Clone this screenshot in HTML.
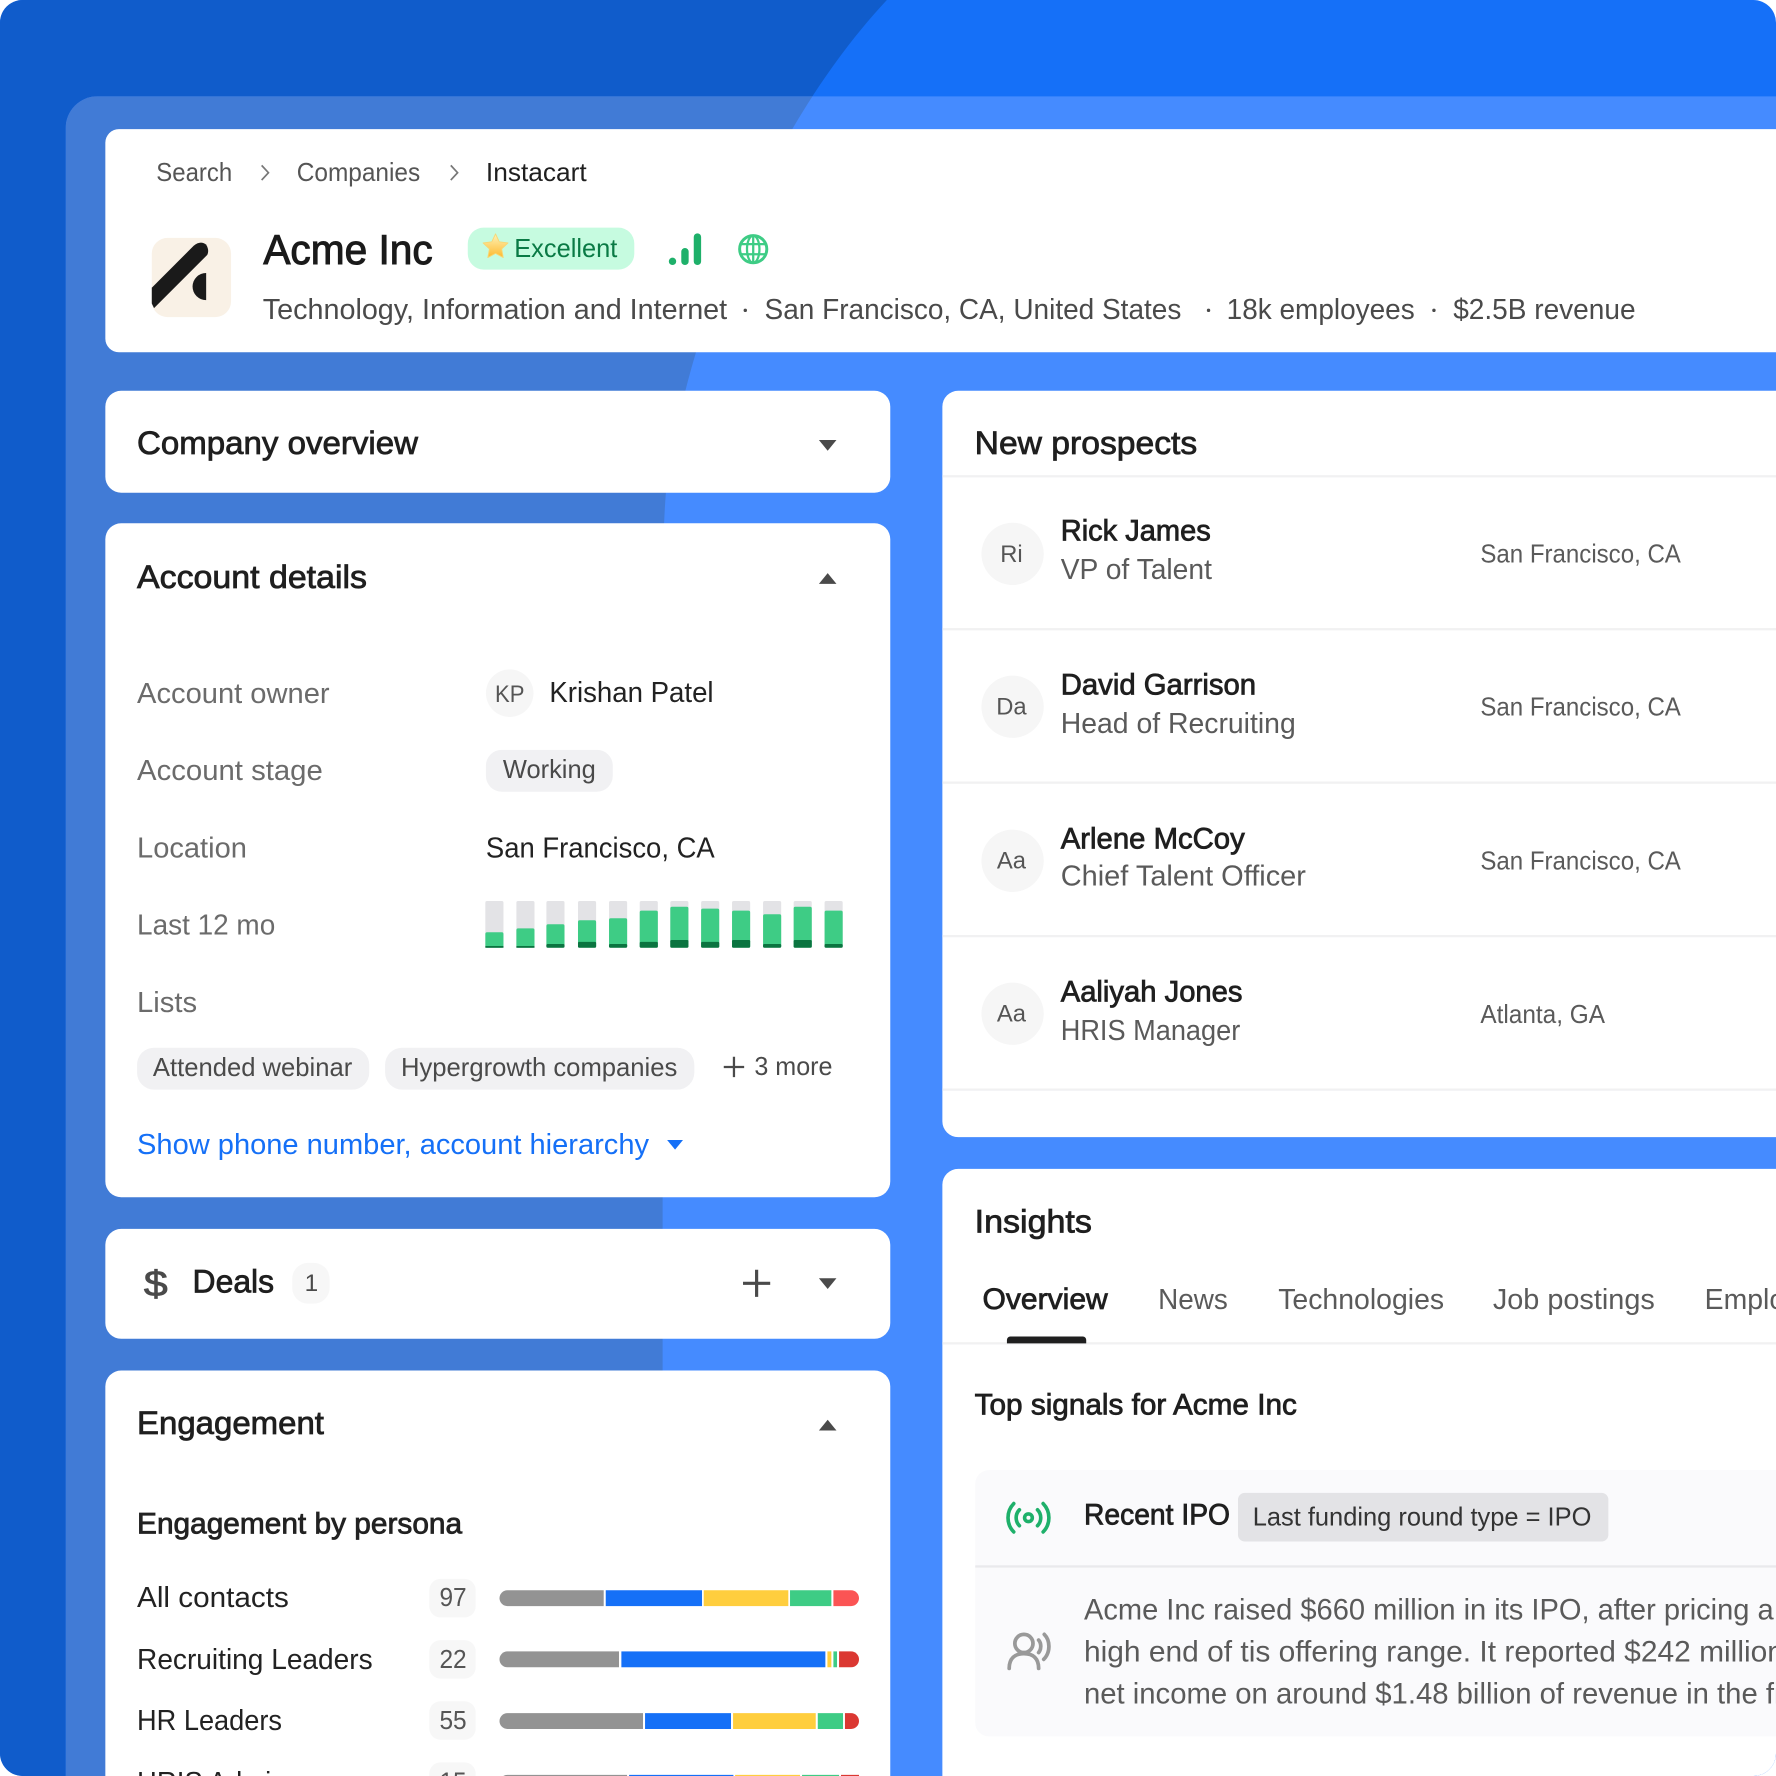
<!DOCTYPE html>
<html><head><meta charset="utf-8"><title>Acme Inc</title>
<style>
html,body{margin:0;padding:0;background:#fff;width:1776px;height:1776px;overflow:hidden}
svg{display:block}
text{font-family:"Liberation Sans",sans-serif;white-space:pre}
.m{stroke:currentColor;stroke-width:.7}
.h{stroke:currentColor;stroke-width:.9}
</style></head><body>
<svg xmlns="http://www.w3.org/2000/svg" width="1776" height="1776" viewBox="0 0 1568 1568">
<defs><clipPath id="r"><rect width="1568" height="1568" rx="20"/></clipPath>
<clipPath id="lp"><path d="M58 1568V113a28 28 0 0 1 28-28H1568V1568Z"/></clipPath>
<linearGradient id="st" x1="0" y1="0" x2="0" y2="1"><stop offset="0" stop-color="#fff3b8"/><stop offset="1" stop-color="#fdb92e"/></linearGradient></defs>
<g clip-path="url(#r)">
<rect width="1568" height="1568" fill="#1570f8"/>
<path d="M0 0H783C680 110 606 290 588 434C585 470 585 520 585 600V1568H0Z" fill="#105ccb"/>
<g clip-path="url(#lp)"><rect width="1568" height="1568" fill="#458bff"/>
<path d="M0 0H783C680 110 606 290 588 434C585 470 585 520 585 600V1568H0Z" fill="#417bd6"/></g>

<!-- cards -->
<g fill="#fff">
<path d="M1568 114H105a12 12 0 0 0-12 12V299a12 12 0 0 0 12 12H1568Z"/>
<rect x="93" y="345" width="693" height="90" rx="14"/>
<rect x="93" y="462" width="693" height="595" rx="14"/>
<rect x="93" y="1085" width="693" height="97" rx="14"/>
<rect x="93" y="1210" width="693" height="400" rx="14"/>
<path d="M1568 345H846a14 14 0 0 0-14 14V990a14 14 0 0 0 14 14H1568Z"/>
<path d="M1568 1032H846a14 14 0 0 0-14 14V1568H1568Z"/>
</g>

<!-- breadcrumb -->
<g font-size="22.500" fill="#555">
<text x="138" y="160" textLength="67" lengthAdjust="spacingAndGlyphs">Search</text>
<text x="262" y="160" textLength="109" lengthAdjust="spacingAndGlyphs">Companies</text>
<text x="429" y="160" textLength="89" lengthAdjust="spacingAndGlyphs" fill="#1f1f1f">Instacart</text>
</g>
<path d="M231 146l6 6.500-6 6.500M398 146l6 6.500-6 6.500" fill="none" stroke="#777" stroke-width="1.500"/>

<!-- logo -->
<rect x="134" y="210" width="70" height="70" rx="14" fill="#f9f1e6"/>
<path d="M134 254L171 217Q177 212 182 216Q185 221 183 225L136 272L134 268Z" fill="#1a1a1a"/>
<path d="M182 241A12 12 0 0 0 182 265Z" fill="#1a1a1a"/>

<text x="232.500" y="233" font-size="36.500" textLength="149.500" lengthAdjust="spacingAndGlyphs" fill="#1a1a1a" color="#1a1a1a" class="h">Acme Inc</text>

<rect x="413" y="201" width="147" height="37" rx="14" fill="#c6fbe0"/>
<path d="M437.500 206.500l3.300 7 7.700 1-5.600 5.300 1.400 7.600-6.800-3.700-6.800 3.700 1.400-7.600-5.600-5.300 7.700-1Z" fill="url(#st)" stroke="#f7d774" stroke-width=".8" stroke-linejoin="round"/>
<text x="454" y="227" font-size="22.500" textLength="91" lengthAdjust="spacingAndGlyphs" fill="#0a7a45">Excellent</text>

<g fill="#1eb06a">
<rect x="590.500" y="227.500" width="6.500" height="6.500" rx="3.250"/>
<rect x="601.500" y="219" width="6.500" height="15" rx="3.250"/>
<rect x="612.500" y="206" width="6.500" height="28" rx="3.250"/>
</g>
<g transform="translate(665 220)" fill="none" stroke="#3ecc85">
<circle r="12" stroke-width="2.600" fill="#fff"/>
<g stroke-width="2"><ellipse rx="5.500" ry="12"/><path d="M0-12V12M-12-4.500H12M-12 4.500H12"/></g>
</g>

<g font-size="25" fill="#4a4a4a">
<text x="232" y="281.500" textLength="410" lengthAdjust="spacingAndGlyphs">Technology, Information and Internet</text>
<text x="675" y="281.500" textLength="368" lengthAdjust="spacingAndGlyphs">San Francisco, CA, United States</text>
<text x="1083" y="281.500" textLength="166" lengthAdjust="spacingAndGlyphs">18k employees</text>
<text x="1283" y="281.500" textLength="161" lengthAdjust="spacingAndGlyphs">$2.5B revenue</text>
</g>
<g fill="#4a4a4a"><circle cx="658" cy="274" r="1.500"/><circle cx="1067" cy="274" r="1.500"/><circle cx="1266" cy="274" r="1.500"/></g>

<!-- headings -->
<g font-size="29" fill="#1f1f1f" color="#1f1f1f" class="m">
<text x="121" y="401" textLength="248" lengthAdjust="spacingAndGlyphs">Company overview</text>
<text x="121" y="519" textLength="203" lengthAdjust="spacingAndGlyphs">Account details</text>
<text x="170" y="1141" textLength="72" lengthAdjust="spacingAndGlyphs">Deals</text>
<text x="121" y="1266" textLength="165" lengthAdjust="spacingAndGlyphs">Engagement</text>
<text x="860.500" y="401" textLength="196.500" lengthAdjust="spacingAndGlyphs">New prospects</text>
<text x="860.500" y="1088" textLength="103.500" lengthAdjust="spacingAndGlyphs">Insights</text>
</g>
<g fill="#4a4a4a">
<path d="M723 388.500h15.500l-7.750 9.500Z"/>
<path d="M723 515.500h15.500l-7.750-9.500Z"/>
<path d="M723 1128.500h15.500l-7.750 9.500Z"/>
<path d="M723 1263h15.500l-7.750-9.500Z"/>
</g>

<!-- account rows -->
<g font-size="25" fill="#6b6b6b">
<text x="121" y="620.500" textLength="170" lengthAdjust="spacingAndGlyphs">Account owner</text>
<text x="121" y="688.500" textLength="164" lengthAdjust="spacingAndGlyphs">Account stage</text>
<text x="121" y="757" textLength="97" lengthAdjust="spacingAndGlyphs">Location</text>
<text x="121" y="825" textLength="122" lengthAdjust="spacingAndGlyphs">Last 12 mo</text>
<text x="121" y="893.500" textLength="53" lengthAdjust="spacingAndGlyphs">Lists</text>
</g>
<circle cx="450" cy="612" r="21" fill="#f6f6f6"/>
<text x="437" y="620" font-size="21" textLength="26" lengthAdjust="spacingAndGlyphs" fill="#555">KP</text>
<g font-size="25" fill="#222">
<text x="485" y="620" textLength="145" lengthAdjust="spacingAndGlyphs">Krishan Patel</text>
<text x="429" y="757" textLength="202" lengthAdjust="spacingAndGlyphs">San Francisco, CA</text>
</g>
<rect x="429" y="662" width="112" height="37" rx="14" fill="#f1f1f3"/>
<g fill="#f1f1f3"><rect x="121" y="925" width="205" height="37" rx="15"/><rect x="340" y="925" width="273" height="37" rx="15"/></g>
<g font-size="22.500" fill="#4a4a4a">
<text x="444" y="687" textLength="82" lengthAdjust="spacingAndGlyphs">Working</text>
<text x="135" y="950" textLength="176" lengthAdjust="spacingAndGlyphs">Attended webinar</text>
<text x="354" y="950" textLength="244" lengthAdjust="spacingAndGlyphs">Hypergrowth companies</text>
<text x="666" y="949" textLength="69" lengthAdjust="spacingAndGlyphs">3 more</text>
</g>
<path d="M648 933V951M639 942H657" stroke="#4a4a4a" stroke-width="2" fill="none"/>

<!-- 12 mo bars -->
<g>
<g fill="#e3e3e6">
<rect x="428.500" y="795.500" width="16" height="41" rx="1.500"/><rect x="455.900" y="795.500" width="16" height="41" rx="1.500"/><rect x="482.400" y="795.500" width="16" height="41" rx="1.500"/><rect x="510.300" y="795.500" width="16" height="41" rx="1.500"/><rect x="537.700" y="795.500" width="16" height="41" rx="1.500"/><rect x="564.800" y="795.500" width="16" height="41" rx="1.500"/><rect x="591.800" y="795.500" width="16" height="41" rx="1.500"/><rect x="619" y="795.500" width="16" height="41" rx="1.500"/><rect x="646.300" y="795.500" width="16" height="41" rx="1.500"/><rect x="673.700" y="795.500" width="16" height="41" rx="1.500"/><rect x="700.700" y="795.500" width="16" height="41" rx="1.500"/><rect x="728" y="795.500" width="16" height="41" rx="1.500"/>
</g>
<g fill="#3ecc85">
<rect x="428.500" y="823.100" width="16" height="13.500" rx="1.500"/><rect x="455.900" y="819.600" width="16" height="17" rx="1.500"/><rect x="482.400" y="816" width="16" height="20.600" rx="1.500"/><rect x="510.300" y="812.500" width="16" height="24.100" rx="1.500"/><rect x="537.700" y="810.700" width="16" height="25.900" rx="1.500"/><rect x="564.800" y="804" width="16" height="32.600" rx="1.500"/><rect x="591.800" y="800.500" width="16" height="36.100" rx="1.500"/><rect x="619" y="802.200" width="16" height="34.400" rx="1.500"/><rect x="646.300" y="804" width="16" height="32.600" rx="1.500"/><rect x="673.700" y="807.200" width="16" height="29.400" rx="1.500"/><rect x="700.700" y="800.500" width="16" height="36.100" rx="1.500"/><rect x="728" y="804" width="16" height="32.600" rx="1.500"/>
</g>
<g fill="#0b7440">
<rect x="428.500" y="835.200" width="16" height="1.600"/><rect x="455.900" y="835.200" width="16" height="1.600"/><rect x="482.400" y="833.400" width="16" height="3.400" rx="1"/><rect x="510.300" y="831.600" width="16" height="5.200" rx="1"/><rect x="537.700" y="833.400" width="16" height="3.400" rx="1"/><rect x="564.800" y="831.600" width="16" height="5.200" rx="1"/><rect x="591.800" y="829.900" width="16" height="6.900" rx="1"/><rect x="619" y="831.600" width="16" height="5.200" rx="1"/><rect x="646.300" y="829.900" width="16" height="6.900" rx="1"/><rect x="673.700" y="833.400" width="16" height="3.400" rx="1"/><rect x="700.700" y="829.900" width="16" height="6.900" rx="1"/><rect x="728" y="833.400" width="16" height="3.400" rx="1"/>
</g>
</g>

<text x="121" y="1019" font-size="25" textLength="452" lengthAdjust="spacingAndGlyphs" fill="#1570f7">Show phone number, account hierarchy</text>
<path d="M589 1006.500h14l-7 8.500Z" fill="#1570f7"/>

<!-- deals -->
<text x="127" y="1144" font-size="32" textLength="21" lengthAdjust="spacingAndGlyphs" fill="#4a4a4a" color="#4a4a4a" class="m">$</text>
<rect x="258" y="1115" width="33" height="36" rx="14" fill="#f7f7f7"/>
<text x="269" y="1140" font-size="21.500" fill="#4a4a4a">1</text>
<path d="M668 1121V1145M656 1133H680" stroke="#4a4a4a" stroke-width="2.800" fill="none"/>

<!-- engagement -->
<text x="121" y="1354" font-size="26" textLength="287" lengthAdjust="spacingAndGlyphs" fill="#222" color="#222" class="m">Engagement by persona</text>
<g font-size="25" fill="#222">
<text x="121" y="1419" textLength="134" lengthAdjust="spacingAndGlyphs">All contacts</text>
<text x="121" y="1473.500" textLength="208" lengthAdjust="spacingAndGlyphs">Recruiting Leaders</text>
<text x="121" y="1527.500" textLength="128" lengthAdjust="spacingAndGlyphs">HR Leaders</text>
<text x="121" y="1582" textLength="132" lengthAdjust="spacingAndGlyphs">HRIS Admin</text>
</g>
<g fill="#f7f7f7"><rect x="379" y="1394" width="41" height="34" rx="10"/><rect x="379" y="1448" width="41" height="34" rx="10"/><rect x="379" y="1502" width="41" height="34" rx="10"/><rect x="379" y="1556" width="41" height="34" rx="10"/></g>
<g font-size="23" fill="#555">
<text x="388" y="1418" textLength="24" lengthAdjust="spacingAndGlyphs">97</text>
<text x="388" y="1472.500" textLength="24" lengthAdjust="spacingAndGlyphs">22</text>
<text x="388" y="1526.500" textLength="24" lengthAdjust="spacingAndGlyphs">55</text>
<text x="388" y="1581" textLength="24" lengthAdjust="spacingAndGlyphs">15</text>
</g>
<!-- row 1 -->
<path d="M448 1404H533V1418H448a7 7 0 0 1 0-14Z" fill="#939393"/><rect x="534.800" y="1404" width="85" height="14" fill="#1570f7"/><rect x="621.300" y="1404" width="74.700" height="14" fill="#ffce3e"/><rect x="697.500" y="1404" width="36.500" height="14" fill="#3ecc85"/><path d="M735.800 1404H751.400a7 7 0 0 1 0 14H735.800Z" fill="#fb5454"/>
<!-- row 2 -->
<path d="M448 1458H546.500V1472H448a7 7 0 0 1 0-14Z" fill="#939393"/><rect x="548.600" y="1458" width="180.100" height="14" fill="#1570f7"/><rect x="730.500" y="1458" width="3.500" height="14" fill="#ffce3e"/><rect x="735.800" y="1458" width="3.200" height="14" fill="#3ecc85"/><path d="M740.800 1458H751.400a7 7 0 0 1 0 14H740.800Z" fill="#db3832"/>
<!-- row 3 -->
<path d="M448 1512.500H567.700V1526.500H448a7 7 0 0 1 0-14Z" fill="#939393"/><rect x="569.500" y="1512.500" width="75.900" height="14" fill="#1570f7"/><rect x="647.200" y="1512.500" width="73" height="14" fill="#ffce3e"/><rect x="722" y="1512.500" width="22.300" height="14" fill="#3ecc85"/><path d="M746 1512.500H751.400a7 7 0 0 1 0 14H746Z" fill="#db3832"/>
<!-- row 4 -->
<path d="M448 1567H553.600V1581H448a7 7 0 0 1 0-14Z" fill="#939393"/><rect x="555.400" y="1567" width="92.100" height="14" fill="#1570f7"/><rect x="649" y="1567" width="57.300" height="14" fill="#ffce3e"/><rect x="708.100" y="1567" width="32.700" height="14" fill="#3ecc85"/><rect x="742.500" y="1567" width="15.900" height="14" fill="#db3832"/>

<!-- prospects -->
<g fill="#f1f1f2"><rect x="832" y="419.500" width="736" height="2"/><rect x="832" y="554.500" width="736" height="2"/><rect x="832" y="690" width="736" height="2"/><rect x="832" y="825.500" width="736" height="2"/><rect x="832" y="961" width="736" height="2"/></g>
<g fill="#f6f6f6"><circle cx="894" cy="489" r="27.500"/><circle cx="894" cy="624" r="27.500"/><circle cx="894" cy="760" r="27.500"/><circle cx="894" cy="895" r="27.500"/></g>
<g font-size="21" fill="#555" text-anchor="middle">
<text x="893" y="496">Ri</text><text x="893" y="631">Da</text><text x="893" y="767">Aa</text><text x="893" y="902">Aa</text>
</g>
<g font-size="26" fill="#1f1f1f" color="#1f1f1f" class="m">
<text x="936.500" y="477" textLength="132.500" lengthAdjust="spacingAndGlyphs">Rick James</text>
<text x="936.500" y="613" textLength="172.500" lengthAdjust="spacingAndGlyphs">David Garrison</text>
<text x="936.500" y="749" textLength="162.500" lengthAdjust="spacingAndGlyphs">Arlene McCoy</text>
<text x="936.500" y="884" textLength="160.500" lengthAdjust="spacingAndGlyphs">Aaliyah Jones</text>
</g>
<g font-size="25.500" fill="#5a5a5a">
<text x="936.500" y="511" textLength="133.500" lengthAdjust="spacingAndGlyphs">VP of Talent</text>
<text x="936.500" y="647" textLength="207.500" lengthAdjust="spacingAndGlyphs">Head of Recruiting</text>
<text x="936.500" y="782" textLength="216.500" lengthAdjust="spacingAndGlyphs">Chief Talent Officer</text>
<text x="936.500" y="918" textLength="158.500" lengthAdjust="spacingAndGlyphs">HRIS Manager</text>
</g>
<g font-size="22.500" fill="#5a5a5a">
<text x="1307" y="496.500" textLength="177" lengthAdjust="spacingAndGlyphs">San Francisco, CA</text>
<text x="1307" y="631.500" textLength="177" lengthAdjust="spacingAndGlyphs">San Francisco, CA</text>
<text x="1307" y="767.500" textLength="177" lengthAdjust="spacingAndGlyphs">San Francisco, CA</text>
<text x="1307" y="903" textLength="110" lengthAdjust="spacingAndGlyphs">Atlanta, GA</text>
</g>

<!-- insights -->
<text x="867.500" y="1155.500" font-size="26" textLength="110.500" lengthAdjust="spacingAndGlyphs" fill="#1f1f1f" color="#1f1f1f" class="m">Overview</text>
<g font-size="25.500" fill="#5a5a5a">
<text x="1022.500" y="1155.500" textLength="61.500" lengthAdjust="spacingAndGlyphs">News</text>
<text x="1128.500" y="1155.500" textLength="146.500" lengthAdjust="spacingAndGlyphs">Technologies</text>
<text x="1318" y="1155.500" textLength="143" lengthAdjust="spacingAndGlyphs">Job postings</text>
<text x="1505" y="1155.500" textLength="124" lengthAdjust="spacingAndGlyphs">Employees</text>
</g>
<rect x="832" y="1185" width="736" height="2" fill="#f1f1f2"/>
<path d="M889 1186V1183a3 3 0 0 1 3-3H956a3 3 0 0 1 3 3V1186Z" fill="#1f1f1f"/>
<text x="860.500" y="1249" font-size="26" textLength="284.500" lengthAdjust="spacingAndGlyphs" fill="#1f1f1f" color="#1f1f1f" class="m">Top signals for Acme Inc</text>

<path d="M1568 1298H873a12 12 0 0 0-12 12V1521a12 12 0 0 0 12 12H1568Z" fill="#fafafc"/>
<rect x="861" y="1382" width="707" height="2" fill="#e9e9ec"/>
<g fill="none" stroke="#1eb06a" stroke-width="3.200" stroke-linecap="round">
<circle cx="908" cy="1340" r="3.400"/>
<path d="M900 1333a10 10 0 0 0 0 14M916 1333a10 10 0 0 1 0 14M895 1327.500a18 18 0 0 0 0 25M921 1327.500a18 18 0 0 1 0 25"/>
</g>
<text x="957" y="1346" font-size="26" textLength="129" lengthAdjust="spacingAndGlyphs" fill="#1f1f1f" color="#1f1f1f" class="m">Recent IPO</text>
<rect x="1093" y="1318" width="327" height="43" rx="6" fill="#e3e3e6"/>
<text x="1106" y="1347" font-size="23" textLength="299" lengthAdjust="spacingAndGlyphs" fill="#333">Last funding round type = IPO</text>
<g fill="none" stroke="#999" stroke-width="3.300" stroke-linecap="round">
<circle cx="904" cy="1451" r="8"/>
<path d="M891 1473c0-9 5-13 13-13s13 4 13 13"/>
<path d="M917 1448c2.500 3 2.500 8 0 11M922 1443c5.500 5.500 5.500 16-.5 22"/>
</g>
<g font-size="26.500" fill="#5a5a5a">
<text x="957" y="1430" textLength="609" lengthAdjust="spacingAndGlyphs">Acme Inc raised $660 million in its IPO, after pricing a</text>
<text x="957" y="1467" textLength="618" lengthAdjust="spacingAndGlyphs">high end of tis offering range. It reported $242 million</text>
<text x="957" y="1504" textLength="615" lengthAdjust="spacingAndGlyphs">net income on around $1.48 billion of revenue in the fi</text>
</g>
</g>
</svg>
</body></html>
